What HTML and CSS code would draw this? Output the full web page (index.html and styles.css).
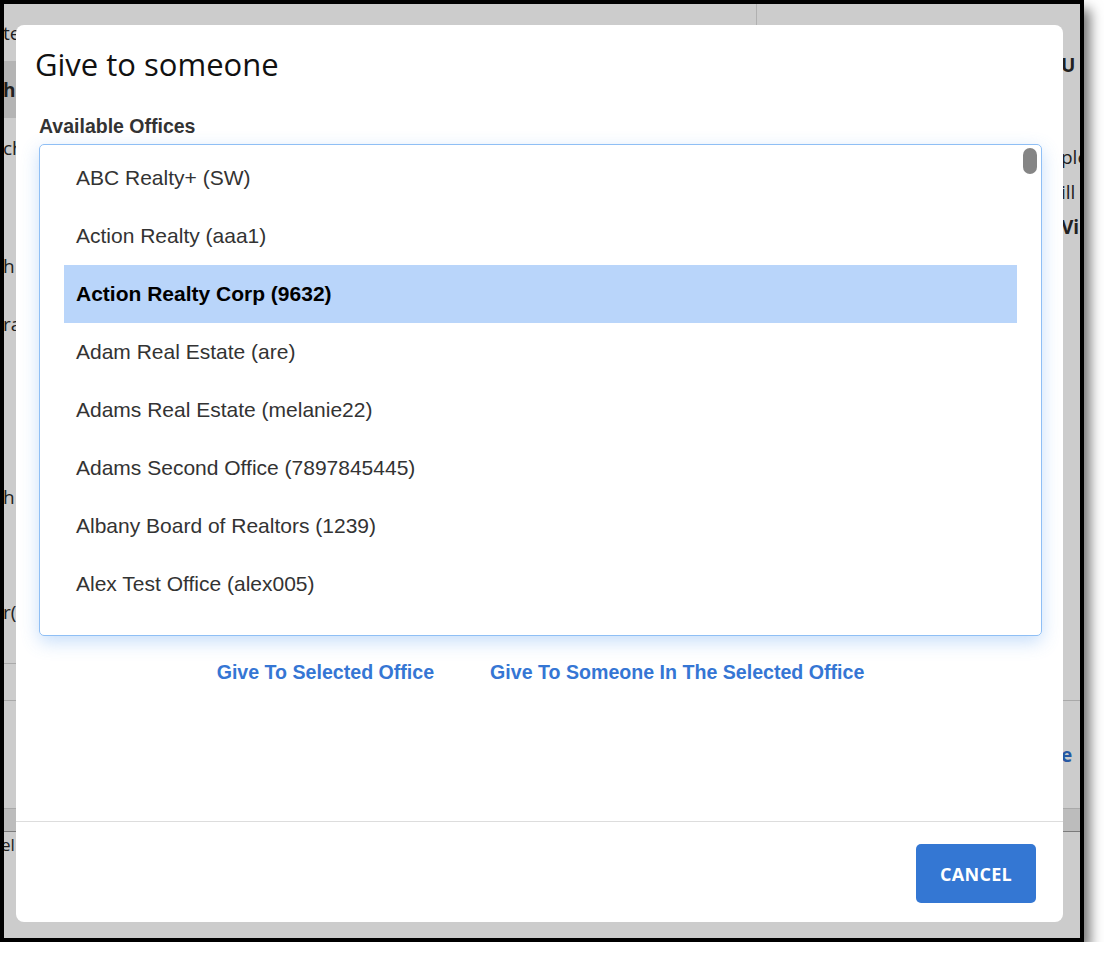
FILE: index.html
```html
<!DOCTYPE html>
<html lang="en">
<head>
<meta charset="utf-8">
<title>Give to someone</title>
<link rel="stylesheet" href="styles.css">
</head>
<body>
<div class="window">
  <div class="page">
    <div class="page-main">
      <div class="bg-left">
        <div class="bg-row h57">te S</div>
        <div class="bg-row h57 nav-active">h</div>
        <div class="bg-row h60">ch</div>
        <div class="bg-row h59"></div>
        <div class="bg-row h58">h</div>
        <div class="bg-row h58">ra</div>
        <div class="bg-row h115"></div>
        <div class="bg-row h58">h</div>
        <div class="bg-row h57"></div>
        <div class="bg-row h58">r(</div>
        <div class="bg-row h22"></div>
        <div class="bg-row h37 rule"></div>
        <div class="bg-row rule grow"></div>
      </div>
      <div class="bg-right">
        <div class="bg-row h32"></div>
        <div class="bg-row h58 strong">U F</div>
        <div class="bg-para">
          <p>ple</p>
          <p>ill</p>
          <p class="strong">Vi</p>
        </div>
        <div class="bg-spacer"></div>
        <div class="bg-row h108 rule link">e</div>
      </div>
    </div>
    <div class="page-band"></div>
    <div class="page-foot">el</div>
  </div>

  <div class="overlay">
    <div class="modal">
      <div class="modal-body">
        <h2 class="modal-title">Give to someone</h2>
        <div class="field-label">Available Offices</div>
        <div class="listbox">
          <ul class="options">
            <li class="option">ABC Realty+ (SW)</li>
            <li class="option">Action Realty (aaa1)</li>
            <li class="option selected">Action Realty Corp (9632)</li>
            <li class="option">Adam Real Estate (are)</li>
            <li class="option">Adams Real Estate (melanie22)</li>
            <li class="option">Adams Second Office (7897845445)</li>
            <li class="option">Albany Board of Realtors (1239)</li>
            <li class="option">Alex Test Office (alex005)</li>
          </ul>
          <div class="scroll-thumb"></div>
        </div>
        <div class="actions">
          <a class="action-link" href="#">Give To Selected Office</a>
          <a class="action-link" href="#">Give To Someone In The Selected Office</a>
        </div>
      </div>
      <div class="modal-footer">
        <button class="btn-cancel" type="button">CANCEL</button>
      </div>
    </div>
  </div>
</div>
</body>
</html>
```

FILE: styles.css
```css
* { box-sizing: border-box; }

html, body {
  margin: 0;
  padding: 0;
  background: #ffffff;
}

.window {
  position: relative;
  width: 1084px;
  height: 942px;
  border: 4px solid #000;
  box-shadow: 6px 9px 12px rgba(0, 0, 0, 0.55);
  overflow: hidden;
}

/* ---------- background page ---------- */
.page {
  height: 100%;
  background: #ffffff;
  display: flex;
  flex-direction: column;
  font-family: "Open Sans", "Noto Sans", sans-serif;
  font-size: 19px;
  color: #2a2a2a;
}

.page-main {
  height: 804px;
  display: flex;
}

.bg-left {
  width: 753px;
  border-right: 1px solid #dcdcdc;
  display: flex;
  flex-direction: column;
  overflow: hidden;
}

.bg-right {
  flex: 1;
  display: flex;
  flex-direction: column;
  overflow: hidden;
}

.bg-row {
  display: flex;
  align-items: center;
  white-space: nowrap;
  flex-shrink: 0;
}

.bg-left .bg-row { margin-left: -1px; }
.bg-right .bg-row, .bg-right .bg-para { padding-left: 304px; }

.h22 { height: 22px; }
.h32 { height: 32px; }
.h37 { height: 37px; }
.h57 { height: 57px; }
.h58 { height: 58px; }
.h59 { height: 59px; }
.h60 { height: 60px; }
.h108 { height: 108px; }
.h115 { height: 115px; }
.grow { flex: 1; }

.nav-active {
  background: #e1e1e1;
  font-weight: 700;
}

.rule { border-top: 1px solid #d4d4d4; }

.strong { font-weight: 700; }

.link {
  color: #2f6fcc;
  font-weight: 700;
}

.bg-para {
  margin-top: 46px;
}

.bg-para p {
  margin: 0;
  line-height: 35px;
  white-space: nowrap;
}

.bg-spacer { flex: 1; }

.page-band {
  height: 24px;
  background: #ececec;
  border-top: 1px solid #d4d4d4;
  border-bottom: 1px solid #9a9a9a;
}

.page-foot {
  padding-top: 2px;
  font-size: 17px;
  line-height: 22px;
  margin-left: -3px;
}

/* ---------- overlay + modal ---------- */
.overlay {
  position: absolute;
  inset: 0;
  background: rgba(0, 0, 0, 0.2);
  display: flex;
  padding: 21px 17px 16px 12px;
}

.modal {
  flex: 1;
  background: #ffffff;
  border-radius: 8px;
  display: flex;
  flex-direction: column;
}

.modal-body {
  flex: 1;
  padding: 0 21px 0 23px;
  display: flex;
  flex-direction: column;
}

.modal-title {
  margin: 19px 0 0 -4px;
  font-family: "Open Sans", "Noto Sans", sans-serif;
  font-weight: 500;
  font-size: 31px;
  line-height: 40px;
  color: #111;
}

.field-label {
  margin-top: 31px;
  font-family: "Liberation Sans", Arial, sans-serif;
  font-weight: 700;
  font-size: 19.5px;
  line-height: 22px;
  color: #333;
}

.listbox {
  position: relative;
  margin-top: 7px;
  height: 492px;
  border: 1px solid #8fbff5;
  border-radius: 5px;
  box-shadow: 0 6px 18px rgba(70, 145, 240, 0.3);
  overflow: hidden;
}

.options {
  list-style: none;
  margin: 0;
  padding: 4px 24px 0;
}

.option {
  height: 58px;
  line-height: 58px;
  padding: 0 12px;
  font-family: "Liberation Sans", Arial, sans-serif;
  font-size: 21px;
  color: #333;
  white-space: nowrap;
}

.option.selected {
  background: #b9d5fa;
  font-weight: 700;
  color: #000;
}

.scroll-thumb {
  position: absolute;
  top: 3px;
  right: 4px;
  width: 14px;
  height: 26px;
  border-radius: 7px;
  background: #858585;
}

.actions {
  margin-top: 25px;
  display: flex;
  justify-content: center;
  gap: 56px;
}

.action-link {
  font-family: "Liberation Sans", Arial, sans-serif;
  font-weight: 700;
  font-size: 19.6px;
  line-height: 22px;
  color: #3576d4;
  text-decoration: none;
}

.modal-footer {
  border-top: 1px solid #dddddd;
  padding: 22px 27px 19px;
  display: flex;
  justify-content: flex-end;
}

.btn-cancel {
  width: 120px;
  height: 59px;
  border: none;
  border-radius: 5px;
  background: #3477d3;
  color: #ffffff;
  font-family: "Open Sans", "Noto Sans", sans-serif;
  font-weight: 700;
  font-size: 18px;
  letter-spacing: 0.3px;
  padding: 0;
}
```
